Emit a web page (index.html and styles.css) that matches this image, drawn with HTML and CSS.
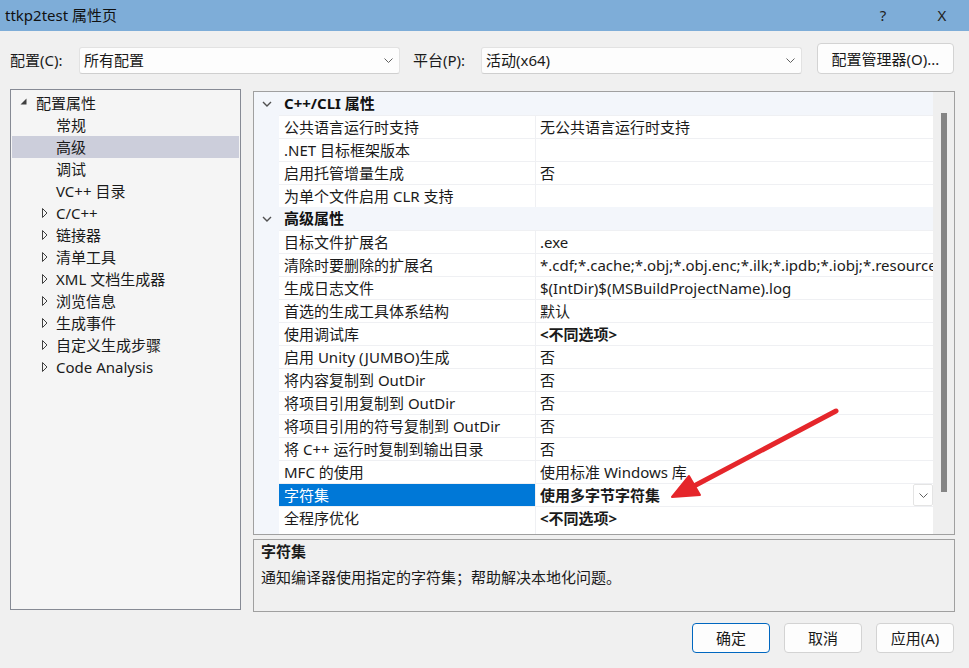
FILE: index.html
```html
<!DOCTYPE html>
<html lang="zh-CN">
<head>
<meta charset="utf-8">
<title>ttkp2test 属性页</title>
<link rel="stylesheet" href="styles.css">
</head>
<body>
<div class="window">
  <div class="titlebar">
    <span class="title">ttkp2test 属性页</span>
    <span class="tb-help">?</span>
    <span class="tb-close">X</span>
  </div>

  <div class="toolbar">
    <span class="lbl lbl-config">配置(C):</span>
    <div class="combo">
      <span>所有配置</span>
      <svg class="chev" width="9" height="5" viewBox="0 0 9 5"><path d="M0.5 0.5 L4.5 4.5 L8.5 0.5" fill="none" stroke="#606060" stroke-width="1"/></svg>
    </div>
    <span class="lbl lbl-platform">平台(P):</span>
    <div class="combo">
      <span>活动(x64)</span>
      <svg class="chev" width="9" height="5" viewBox="0 0 9 5"><path d="M0.5 0.5 L4.5 4.5 L8.5 0.5" fill="none" stroke="#606060" stroke-width="1"/></svg>
    </div>
    <button class="btn btn-mgr">配置管理器(O)...</button>
  </div>

  <div class="main">
    <div class="tree">
      <div class="trow root">
        <span class="exp"><svg width="7" height="7" viewBox="0 0 7 7"><path d="M6.5 0.5 L6.5 6.5 L0.5 6.5 Z" fill="#404040"/></svg></span>
        <span>配置属性</span>
      </div>
      <div class="trow child"><span class="exp"></span><span>常规</span></div>
      <div class="trow child sel"><span class="exp"></span><span>高级</span></div>
      <div class="trow child"><span class="exp"></span><span>调试</span></div>
      <div class="trow child"><span class="exp"></span><span>VC++ 目录</span></div>
      <div class="trow child"><span class="exp"><svg width="6" height="10" viewBox="0 0 6 10"><path d="M0.5 0.5 L5 5 L0.5 9.5 Z" fill="none" stroke="#404040" stroke-width="1"/></svg></span><span>C/C++</span></div>
      <div class="trow child"><span class="exp"><svg width="6" height="10" viewBox="0 0 6 10"><path d="M0.5 0.5 L5 5 L0.5 9.5 Z" fill="none" stroke="#404040" stroke-width="1"/></svg></span><span>链接器</span></div>
      <div class="trow child"><span class="exp"><svg width="6" height="10" viewBox="0 0 6 10"><path d="M0.5 0.5 L5 5 L0.5 9.5 Z" fill="none" stroke="#404040" stroke-width="1"/></svg></span><span>清单工具</span></div>
      <div class="trow child"><span class="exp"><svg width="6" height="10" viewBox="0 0 6 10"><path d="M0.5 0.5 L5 5 L0.5 9.5 Z" fill="none" stroke="#404040" stroke-width="1"/></svg></span><span>XML 文档生成器</span></div>
      <div class="trow child"><span class="exp"><svg width="6" height="10" viewBox="0 0 6 10"><path d="M0.5 0.5 L5 5 L0.5 9.5 Z" fill="none" stroke="#404040" stroke-width="1"/></svg></span><span>浏览信息</span></div>
      <div class="trow child"><span class="exp"><svg width="6" height="10" viewBox="0 0 6 10"><path d="M0.5 0.5 L5 5 L0.5 9.5 Z" fill="none" stroke="#404040" stroke-width="1"/></svg></span><span>生成事件</span></div>
      <div class="trow child"><span class="exp"><svg width="6" height="10" viewBox="0 0 6 10"><path d="M0.5 0.5 L5 5 L0.5 9.5 Z" fill="none" stroke="#404040" stroke-width="1"/></svg></span><span>自定义生成步骤</span></div>
      <div class="trow child"><span class="exp"><svg width="6" height="10" viewBox="0 0 6 10"><path d="M0.5 0.5 L5 5 L0.5 9.5 Z" fill="none" stroke="#404040" stroke-width="1"/></svg></span><span>Code Analysis</span></div>
    </div>

    <div class="right">
      <div class="grid">
        <div class="grid-body">
          <div class="cat">
            <span class="cat-exp"><svg width="10" height="6" viewBox="0 0 10 6"><path d="M1 1 L5 5 L9 1" fill="none" stroke="#505050" stroke-width="1.4"/></svg></span>
            <span class="cat-name">C++/CLI 属性</span>
          </div>
          <div class="prow"><span class="gut"></span><span class="name">公共语言运行时支持</span><span class="value">无公共语言运行时支持</span></div>
          <div class="prow"><span class="gut"></span><span class="name">.NET 目标框架版本</span><span class="value"></span></div>
          <div class="prow"><span class="gut"></span><span class="name">启用托管增量生成</span><span class="value">否</span></div>
          <div class="prow"><span class="gut"></span><span class="name">为单个文件启用 CLR 支持</span><span class="value"></span></div>
          <div class="cat">
            <span class="cat-exp"><svg width="10" height="6" viewBox="0 0 10 6"><path d="M1 1 L5 5 L9 1" fill="none" stroke="#505050" stroke-width="1.4"/></svg></span>
            <span class="cat-name">高级属性</span>
          </div>
          <div class="prow"><span class="gut"></span><span class="name">目标文件扩展名</span><span class="value">.exe</span></div>
          <div class="prow"><span class="gut"></span><span class="name">清除时要删除的扩展名</span><span class="value">*.cdf;*.cache;*.obj;*.obj.enc;*.ilk;*.ipdb;*.iobj;*.resources;*.tlb;*.tli;*.tlh;*.tmp;*.rsp;*.pgc;*.pgd;*.meta</span></div>
          <div class="prow"><span class="gut"></span><span class="name">生成日志文件</span><span class="value">$(IntDir)$(MSBuildProjectName).log</span></div>
          <div class="prow"><span class="gut"></span><span class="name">首选的生成工具体系结构</span><span class="value">默认</span></div>
          <div class="prow"><span class="gut"></span><span class="name">使用调试库</span><span class="value bold">&lt;不同选项&gt;</span></div>
          <div class="prow"><span class="gut"></span><span class="name">启用 Unity (JUMBO)生成</span><span class="value">否</span></div>
          <div class="prow"><span class="gut"></span><span class="name">将内容复制到 OutDir</span><span class="value">否</span></div>
          <div class="prow"><span class="gut"></span><span class="name">将项目引用复制到 OutDir</span><span class="value">否</span></div>
          <div class="prow"><span class="gut"></span><span class="name">将项目引用的符号复制到 OutDir</span><span class="value">否</span></div>
          <div class="prow"><span class="gut"></span><span class="name">将 C++ 运行时复制到输出目录</span><span class="value">否</span></div>
          <div class="prow"><span class="gut"></span><span class="name">MFC 的使用</span><span class="value">使用标准 Windows 库</span></div>
          <div class="prow sel"><span class="gut"></span><span class="name">字符集</span><span class="value bold"><span class="vtext">使用多字节字符集</span><span class="dd"><svg width="9" height="5" viewBox="0 0 9 5"><path d="M0.5 0.5 L4.5 4.5 L8.5 0.5" fill="none" stroke="#606060" stroke-width="1"/></svg></span></span></div>
          <div class="prow"><span class="gut"></span><span class="name">全程序优化</span><span class="value bold">&lt;不同选项&gt;</span></div>
        </div>
        <div class="scrollbar"><div class="thumb"></div></div>
      </div>
      <div class="desc">
        <div class="desc-title">字符集</div>
        <div class="desc-text">通知编译器使用指定的字符集；帮助解决本地化问题。</div>
      </div>
    </div>
  </div>

  <div class="footer">
    <button class="btn btn-ok">确定</button>
    <button class="btn">取消</button>
    <button class="btn">应用(A)</button>
  </div>

  <svg class="annot" width="969" height="668" viewBox="0 0 969 668">
    <line x1="836" y1="411" x2="694" y2="486" stroke="#e5262b" stroke-width="5" stroke-linecap="round"/>
    <path d="M672 497 L689 476 L700 495 Z" fill="#e5262b" stroke="#e5262b" stroke-width="2" stroke-linejoin="round"/>
  </svg>
</div>
</body>
</html>
```

FILE: styles.css
```css
* {
  box-sizing: border-box;
  margin: 0;
  padding: 0;
}

html, body {
  width: 969px;
  height: 668px;
  overflow: hidden;
}

body {
  background: #f0f0f0;
  font-family: "Segoe UI", "Noto Sans", "Noto Sans CJK SC", sans-serif;
  font-size: 15px;
  color: #1a1a1a;
}

.window {
  position: relative;
  width: 969px;
  height: 668px;
  display: flex;
  flex-direction: column;
}

/* title bar */
.titlebar {
  height: 31px;
  flex: none;
  background: #7eadd8;
  display: flex;
  align-items: center;
  padding-left: 5px;
  line-height: 31px;
}

.title {
  flex: 1;
  font-size: 15px;
  color: #111;
}

.tb-help {
  width: 40px;
  text-align: center;
  margin-right: 16px;
  font-size: 15px;
  color: #222;
}

.tb-close {
  width: 46px;
  text-align: center;
  margin-right: 4px;
  font-size: 15px;
  color: #222;
}

/* toolbar */
.toolbar {
  flex: none;
  margin-top: 12px;
  height: 31px;
  display: flex;
  align-items: flex-end;
  padding-left: 10px;
}

.lbl {
  height: 27px;
  line-height: 27px;
  white-space: nowrap;
}

.lbl-config {
  width: 69px;
}

.lbl-platform {
  width: 68px;
  margin-left: 13px;
}

.combo {
  width: 321px;
  height: 27px;
  background: #fdfdfd;
  border: 1px solid #e2e2e2;
  border-bottom-color: #cfcfcf;
  border-radius: 3px;
  display: flex;
  align-items: center;
  justify-content: space-between;
  padding: 0 6px 0 4px;
  line-height: 25px;
}

.btn {
  font-family: "Segoe UI", "Noto Sans", "Noto Sans CJK SC", sans-serif;
  font-size: 15px;
  color: #1a1a1a;
  background: #fdfdfd;
  border: 1px solid #d3d3d3;
  border-radius: 4px;
  height: 30px;
  width: 78px;
  line-height: 28px;
}

.btn-mgr {
  width: 137px;
  height: 31px;
  margin-left: 15px;
}

.btn-ok {
  border-color: #0067c0;
}

/* main */
.main {
  flex: none;
  margin-top: 15px;
  height: 523px;
  display: flex;
  align-items: flex-start;
  padding-left: 10px;
}

.tree {
  width: 231px;
  height: 521px;
  border: 1px solid #868a94;
  background: #f5f5f5;
  padding: 2px 1px;
}

.trow {
  height: 22px;
  display: flex;
  align-items: center;
  line-height: 22px;
  white-space: nowrap;
}

.trow.sel {
  background: #cccedb;
}

.trow.root {
  padding-left: 8px;
}

.trow.root .exp {
  width: 16px;
  display: flex;
  align-items: center;
  padding-bottom: 3px;
}

.trow.child {
  padding-left: 29px;
}

.trow.child .exp {
  width: 15px;
  display: flex;
  align-items: center;
  padding-left: 1px;
}

.right {
  margin-left: 12px;
  padding-top: 2px;
  width: 702px;
  display: flex;
  flex-direction: column;
}

.grid {
  height: 444px;
  border: 1px solid #a0a0a0;
  display: flex;
  background: #fff;
}

.grid-body {
  width: 679px;
  display: flex;
  flex-direction: column;
  overflow: hidden;
  background: linear-gradient(to right, #f3f6fb 0, #f3f6fb 25px, #fff 25px, #fff 281px, #eff0f3 281px, #eff0f3 282px, #fff 282px);
}

.cat {
  height: 23px;
  flex: none;
  display: flex;
  align-items: center;
  background: #f3f6fb;
  font-weight: bold;
  line-height: 23px;
}

.cat-exp {
  width: 25px;
  padding-left: 8px;
  display: flex;
  align-items: center;
}

.cat-name {
  padding-left: 5px;
  color: #111;
}

.prow {
  height: 23px;
  flex: none;
  display: grid;
  grid-template-columns: 25px 256px 1fr;
  line-height: 22px;
}

.gut {
  background: #f3f6fb;
}

.name {
  padding-left: 5px;
  border-top: 1px solid #eff0f3;
  white-space: nowrap;
  overflow: hidden;
  background: #fff;
}

.value {
  padding-left: 4px;
  border-top: 1px solid #eff0f3;
  border-left: 1px solid #eff0f3;
  white-space: nowrap;
  overflow: hidden;
  background: #fff;
}

.bold {
  font-weight: bold;
}

.prow.sel .name {
  background: #0078d7;
  color: #fff;
}

.prow.sel .value {
  display: flex;
  align-items: center;
  justify-content: space-between;
}

.dd {
  width: 20px;
  height: 22px;
  background: #fff;
  border: 1px solid #e4e4e4;
  border-radius: 2px;
  display: flex;
  align-items: center;
  justify-content: center;
}

.scrollbar {
  width: 21px;
  background: #efefef;
  padding: 21px 0 0 8px;
}

.thumb {
  width: 6px;
  height: 379px;
  background: #858585;
}

.desc {
  margin-top: 4px;
  height: 73px;
  border: 1px solid #a0a0a0;
  background: #f0f0f0;
  padding: 0 7px;
}

.desc-title {
  font-weight: bold;
  line-height: 22px;
}

.desc-text {
  line-height: 30px;
}

/* footer */
.footer {
  flex: none;
  display: flex;
  justify-content: flex-end;
  gap: 14px;
  padding-top: 11px;
  padding-right: 15px;
}

.annot {
  position: absolute;
  left: 0;
  top: 0;
  pointer-events: none;
}
```
